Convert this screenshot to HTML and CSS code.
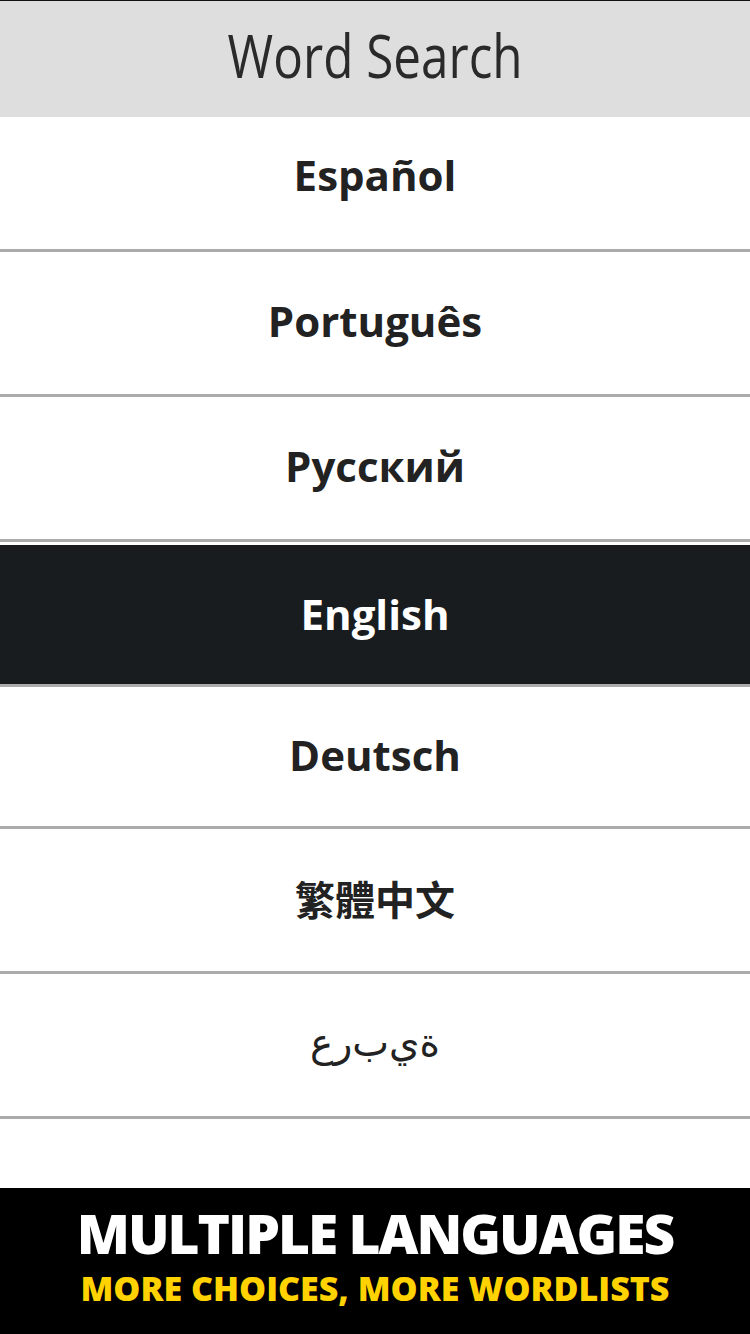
FILE: index.html
```html
<!DOCTYPE html>
<html>
<head>
    <title>Word Search</title>
    <meta name="viewport" content="width=device-width, initial-scale=1.0">
    <link rel="stylesheet" href="styles.css">
</head>
<body>
    <div class="app">
        <!-- 标题栏 -->
        <div class="topbar">
            <span class="title">Word Search</span>
        </div>

        <!-- 语言列表 -->
        <div class="lang-list">
            <div class="lang-item first">Español</div>
            <div class="lang-item">Português</div>
            <div class="lang-item">Русский</div>
            <div class="lang-item active">English</div>
            <div class="lang-item compact">Deutsch</div>
            <div class="lang-item cjk">繁體中文</div>
            <div class="lang-item arabic"><span class="ltr">ع&zwnj;ر&zwnj;ب&zwnj;ي&zwnj;ة</span></div>
        </div>

        <!-- 底部横幅 -->
        <div class="banner">
            <div class="banner-main">MULTIPLE LANGUAGES</div>
            <div class="banner-sub">MORE CHOICES, MORE WORDLISTS</div>
        </div>
    </div>
</body>
</html>
```

FILE: styles.css
```css
/* 基础样式 */
body {
    margin: 0;
    font-family: "Open Sans", "Noto Sans", sans-serif;
    background: #fff;
}
.app {
    width: 750px;
    height: 1334px;
    display: flex;
    flex-direction: column;
    overflow: hidden;
}

/* 标题栏 */
.topbar {
    height: 117px;
    border-top: 1px solid #111;
    background: #dedede;
    display: flex;
    align-items: center;
    justify-content: center;
    box-sizing: border-box;
    padding-bottom: 10px;
}
.title {
    display: inline-block;
    font-size: 61px;
    font-weight: 400;
    color: #2a2a2a;
    transform: scaleX(0.81);
}

/* 语言列表 */
.lang-list {
    flex: 1;
}
.lang-item {
    height: 137px;
    padding-bottom: 5px;
    border-bottom: 3px solid #ababab;
    display: flex;
    align-items: center;
    justify-content: center;
    font-size: 42px;
    font-weight: 700;
    color: #222;
}
.lang-item.first {
    height: 114px;
    padding-bottom: 18px;
}
.lang-item.compact {
    height: 134px;
}
.lang-item.active {
    background: #181c1f;
    color: #fff;
    box-shadow: inset 0 3px 0 #fff;
    padding-top: 3px;
    padding-bottom: 2px;
    height: 137px;
}
.lang-item.cjk {
    font-family: "Noto Sans CJK TC", "Noto Sans CJK SC", sans-serif;
    font-size: 40px;
}
.lang-item.arabic {
    font-family: "DejaVu Sans", sans-serif;
    font-weight: 400;
    font-size: 39px;
}
.ltr {
    direction: ltr;
    unicode-bidi: bidi-override;
}

/* 底部横幅 */
.banner {
    height: 146px;
    box-sizing: border-box;
    padding-bottom: 12px;
    background: #000;
    display: flex;
    flex-direction: column;
    align-items: center;
    justify-content: center;
    line-height: 1;
}
.banner-main {
    color: #fff;
    font-size: 55px;
    font-weight: 800;
    letter-spacing: -2px;
}
.banner-sub {
    color: #ffd200;
    font-size: 34px;
    font-weight: 800;
    margin-top: 11px;
}
```
